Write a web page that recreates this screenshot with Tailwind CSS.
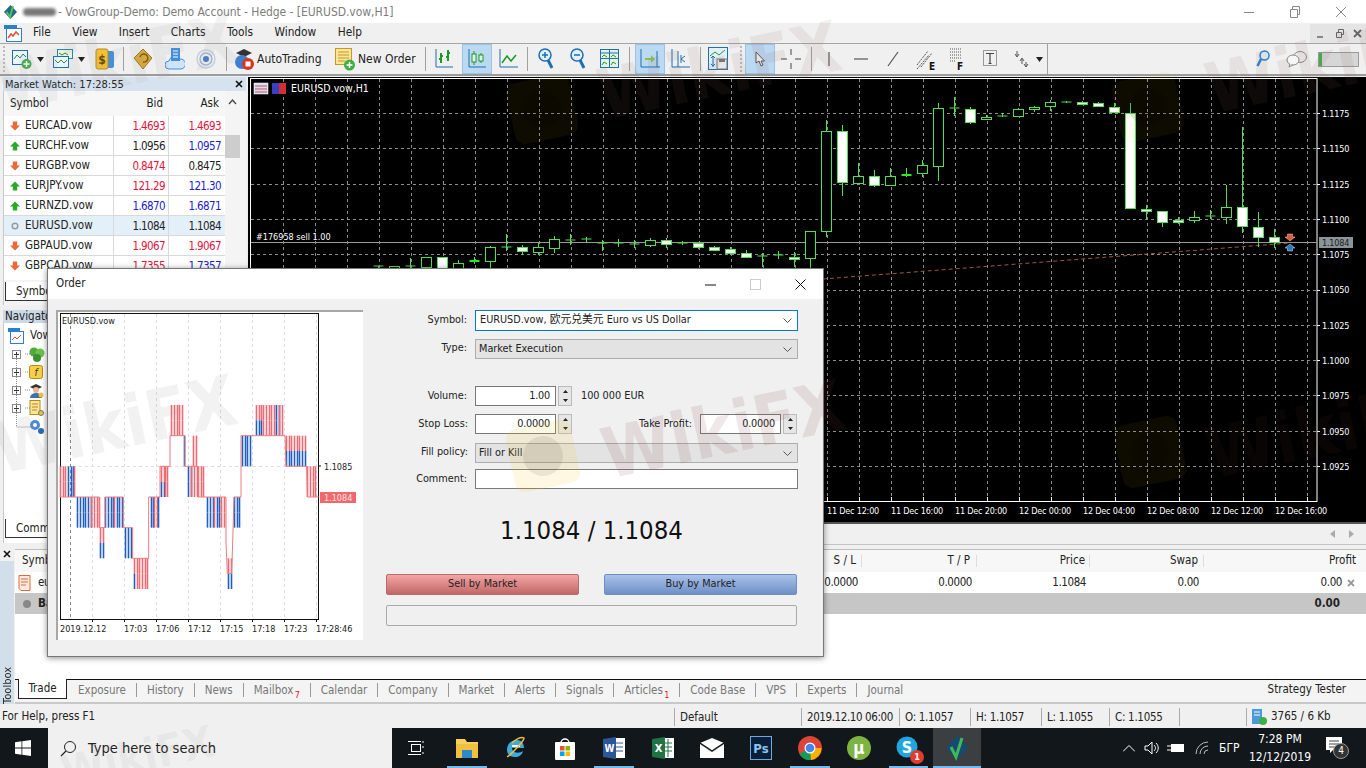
<!DOCTYPE html>
<html lang="en">
<head>
<meta charset="UTF-8">
<title>VowGroup-Demo: Demo Account - Hedge - [EURUSD.vow,H1]</title>
<script src="https://cdn.jsdelivr.net/npm/@tailwindcss/browser@4"></script>
</head>
<body class="relative w-[1366px] h-[768px] overflow-hidden bg-[#f0f0f0] text-[11.5px] leading-none text-[#222] font-['DejaVu_Sans_Condensed','Noto_Sans_CJK_SC',sans-serif]">

<svg class="hidden">
  <defs>
    <symbol id="up" viewBox="0 0 10 10"><path d="M5 .5L10 5.500H7.200V9.500H2.800V5.500H0z" fill="#2aa82a"/></symbol>
    <symbol id="down" viewBox="0 0 10 10"><path d="M5 9.500L0 4.500H2.800V.5H7.200V4.500H10z" fill="#e8693a"/></symbol>
    <symbol id="plus" viewBox="0 0 9 9"><rect x=".5" y=".5" width="8" height="8" fill="#fff" stroke="#8a8a8a"/><path d="M2 4.500H7M4.500 2V7" stroke="#333"/></symbol>
  </defs>
</svg>

<!-- title bar -->
<div class="h-[23px] bg-white flex items-center">
  <svg class="ml-[3px] w-[15px] h-[16px]" viewBox="0 0 15 16"><path d="M7.500 1L14 8l-6.500 7L1 8z" fill="#1f6a8f"/><path d="M3.500 8l3.500 5L10 2" fill="none" stroke="#59c05a" stroke-width="2"/></svg>
  <div class="ml-[5px] w-[33px] h-[8px] bg-[#777] rounded-sm blur-[1.5px]"></div>
  <span class="ml-[2px] text-[12px] tracking-[-0.05px] text-[#7d7d7d]">- VowGroup-Demo: Demo Account - Hedge - [EURUSD.vow,H1]</span>
  <div class="ml-auto mr-[2px] flex items-center">
    <svg class="w-[46px] h-[20px]" viewBox="0 0 46 20"><path d="M18 10.500H28" stroke="#888"/></svg>
    <svg class="w-[46px] h-[20px]" viewBox="0 0 46 20"><path d="M18.500 7.500h7v8h-7zM20.500 7.500v-3h7v8h-2" fill="none" stroke="#888"/></svg>
    <svg class="w-[46px] h-[20px]" viewBox="0 0 46 20"><path d="M18 5L28 15M28 5L18 15" stroke="#888"/></svg>
  </div>
</div>

<!-- menu -->
<div class="h-[21px] flex items-center border-b border-[#a6a6a6] relative">
  <svg class="ml-[4px] w-[18px] h-[18px]" viewBox="0 0 18 18"><rect x="0" y="1" width="13" height="4" fill="#2a7fd0"/><rect x="2.500" y="4.500" width="15" height="13" fill="#fff" stroke="#2a7fd0"/><path d="M4 14l3-4 2 2 3-4 3 3" fill="none" stroke="#e24f3a" stroke-width="1.500"/></svg>
  <nav class="ml-[11px] flex gap-[21.5px] text-[11.8px]">
    <span>File</span><span>View</span><span>Insert</span><span>Charts</span><span>Tools</span><span>Window</span><span>Help</span>
  </nav>
  <div class="ml-auto flex h-[19px] bg-[#e4e4e4] items-center text-[#777]">
    <svg class="w-[20px] h-[19px]" viewBox="0 0 20 19"><path d="M7 13h6" stroke="#666" stroke-width="1.500"/></svg>
    <svg class="w-[20px] h-[19px]" viewBox="0 0 20 19"><path d="M6.500 8.500h5v5h-5zM8.500 8V5.500h5v5H12" fill="none" stroke="#666"/></svg>
    <svg class="w-[16px] h-[19px]" viewBox="0 0 16 19"><path d="M4 6l7 7M11 6l-7 7" stroke="#666" stroke-width="1.800"/></svg>
  </div>
</div>

<!-- toolbar -->
<div class="h-[32px] flex items-center border-b-2 border-[#9b9b9b] bg-[#f0f0f0] shrink-0">
  <div class="ml-[3px] w-[2px] h-[26px] border-l-2 border-dotted border-[#bbb]"></div>
  <svg class="ml-[7px] w-[20px] h-[22px]" viewBox="0 0 20 22"><rect x=".5" y="2.500" width="15" height="14" fill="#eaf5ff" stroke="#1d6fb5"/><path d="M2 11l3-4 3 3 3-4 3 3" fill="none" stroke="#2c8a3e"/><circle cx="14.500" cy="16" r="5" fill="#3fae46"/><path d="M14.500 13v6M11.500 16h6" stroke="#fff" stroke-width="1.500"/></svg>
  <svg class="ml-[5px] w-[7px] h-[5px]" viewBox="0 0 7 5"><path d="M0 0h7L3.500 5z" fill="#222"/></svg>
  <svg class="ml-[9px] w-[20px] h-[22px]" viewBox="0 0 20 22"><rect x="4.500" y="1.500" width="15" height="9" fill="#e6f4d8" stroke="#2c7fb8"/><rect x=".5" y="8.500" width="15" height="11" fill="#eaf5ff" stroke="#1d6fb5"/><path d="M2 12l3 3 3-3 3 3 3-3" fill="none" stroke="#2c8a3e"/><path d="M6 5l3 2 3-2 3 2" fill="none" stroke="#2c8a3e"/></svg>
  <svg class="ml-[5px] w-[7px] h-[5px]" viewBox="0 0 7 5"><path d="M0 0h7L3.500 5z" fill="#222"/></svg>
  <svg class="ml-[10px] w-[20px] h-[26px]" viewBox="0 0 20 26"><rect x="8" y="5" width="11" height="17" rx="2" fill="#3f8fe0"/><rect x="1" y="3" width="12" height="20" rx="2" fill="#f3c233" stroke="#b98a18"/><text x="7" y="18" font-size="12" font-weight="700" text-anchor="middle" fill="#6a4a00">$</text></svg>
  <div class="ml-[8px] w-px h-[24px] bg-[#a0a0a0]"></div>
  <svg class="ml-[9px] w-[20px] h-[22px]" viewBox="0 0 20 22"><path d="M10 1l9 9-9 11-9-11z" fill="#d8a93b" stroke="#9a7420"/><path d="M7 9a4 4 0 1 1 3 5" fill="none" stroke="#7c5b12" stroke-width="1.500"/></svg>
  <svg class="ml-[12px] w-[20px] h-[24px]" viewBox="0 0 20 24"><path d="M4 22a4 4 0 0 1 0-8 6 6 0 0 1 11-2 5 5 0 0 1 1 10z" fill="#cfe4f8" stroke="#3f8fe0"/><rect x="6" y="1" width="9" height="13" fill="#3f8fe0"/><path d="M8 4h5M8 7h5M8 10h5" stroke="#fff"/></svg>
  <svg class="ml-[11px] w-[20px] h-[20px]" viewBox="0 0 20 20"><circle cx="10" cy="10" r="9" fill="none" stroke="#c5cfe0" stroke-width="1.500"/><circle cx="10" cy="10" r="6" fill="none" stroke="#a0b4d8" stroke-width="1.500"/><circle cx="10" cy="10" r="3" fill="#4a78c0"/></svg>
  <div class="ml-[10px] w-px h-[24px] bg-[#a0a0a0]"></div>
  <svg class="ml-[7px] w-[20px] h-[24px]" viewBox="0 0 20 24"><path d="M2 6l8-4 8 4-8 4z" fill="#333"/><circle cx="8" cy="15" r="7" fill="#3f7fd0"/><circle cx="14" cy="17" r="6" fill="#d9351f"/><rect x="11.500" y="14.500" width="5" height="5" fill="#fff"/></svg>
  <span class="ml-[3px] w-[65px] whitespace-nowrap text-[12px]">AutoTrading</span>
  <svg class="ml-[13px] w-[20px] h-[24px]" viewBox="0 0 20 24"><rect x=".5" y="1.500" width="16" height="16" fill="#fbe69a" stroke="#c69a1e"/><path d="M3 5h11M3 8h11M3 11h11M3 14h7" stroke="#c69a1e"/><circle cx="14.500" cy="18" r="5.500" fill="#3fae46"/><path d="M14.500 15v6M11.500 18h6" stroke="#fff" stroke-width="1.500"/></svg>
  <span class="ml-[3px] w-[57px] whitespace-nowrap text-[12px]">New Order</span>
  <div class="ml-[10px] w-px h-[24px] bg-[#a0a0a0]"></div>
  <svg class="ml-[9px] w-[18px] h-[20px]" viewBox="0 0 18 20"><path d="M1 0v18h17" fill="none" stroke="#1d6fb5"/><path d="M6 4v10M4 10h2M6 7h2M13 1v11M11 8h2M13 4h2" stroke="#1a9a2a" stroke-width="2"/></svg>
  <div class="ml-[9px] w-[30px] h-[30px] bg-[#bcd9f2] border border-[#9cc3e6] flex items-center justify-center">
    <svg class="w-[18px] h-[20px]" viewBox="0 0 18 20"><path d="M1 0v18h17" fill="none" stroke="#1d6fb5"/><path d="M6 2v14M13 4v10" stroke="#1a9a2a"/><rect x="4" y="5" width="4" height="8" fill="#e8f5e8" stroke="#1a9a2a"/><rect x="11" y="6" width="4" height="6" fill="#e8f5e8" stroke="#1a9a2a"/></svg>
  </div>
  <svg class="ml-[7px] w-[19px] h-[20px]" viewBox="0 0 19 20"><path d="M1 0v18h18" fill="none" stroke="#1d6fb5"/><path d="M3 14l5-7 4 5 5-6" fill="none" stroke="#1a9a2a" stroke-width="1.500"/></svg>
  <div class="ml-[9px] w-px h-[24px] bg-[#a0a0a0]"></div>
  <svg class="ml-[10px] w-[16px] h-[22px]" viewBox="0 0 16 22"><circle cx="7" cy="7" r="6" fill="#e4f0fb" stroke="#1d6fb5" stroke-width="1.500"/><path d="M4 7h6M7 4v6" stroke="#1d6fb5" stroke-width="1.500"/><path d="M10 12l4 8" stroke="#1d6fb5" stroke-width="3"/></svg>
  <svg class="ml-[16px] w-[16px] h-[22px]" viewBox="0 0 16 22"><circle cx="7" cy="7" r="6" fill="#e4f0fb" stroke="#1d6fb5" stroke-width="1.500"/><path d="M4 7h6" stroke="#1d6fb5" stroke-width="1.500"/><path d="M10 12l4 8" stroke="#1d6fb5" stroke-width="3"/></svg>
  <svg class="ml-[14px] w-[19px] h-[20px]" viewBox="0 0 19 20"><rect x=".5" y=".5" width="18" height="18" fill="#e6f3e0" stroke="#1d6fb5"/><path d="M.5 9.500h18M9.500 .5v18M.5 4h18" stroke="#1d6fb5"/><path d="M2 8l2-2 3 2M11 8l2-2 3 2M2 16l2-3 3 2M11 16l2-3 3 2" fill="none" stroke="#1a9a2a"/></svg>
  <div class="ml-[10px] w-px h-[24px] bg-[#a0a0a0]"></div>
  <div class="ml-[5px] w-[30px] h-[30px] bg-[#bcd9f2] border border-[#9cc3e6] flex items-center justify-center">
    <svg class="w-[20px] h-[20px]" viewBox="0 0 20 20"><path d="M1 0v18h19M17 2v16" fill="none" stroke="#1d6fb5"/><path d="M5 9h6v-3l4 4-4 4v-3H5z" fill="#8cc152"/></svg>
  </div>
  <svg class="ml-[6px] w-[19px] h-[20px]" viewBox="0 0 19 20"><path d="M1 0v18h18M7 2v16" fill="none" stroke="#1d6fb5"/><path d="M10 6v8M10 10l4-3M10 10l4 3" fill="none" stroke="#1d6fb5"/></svg>
  <div class="ml-[10px] w-px h-[24px] bg-[#a0a0a0]"></div>
  <svg class="ml-[7px] w-[20px] h-[24px]" viewBox="0 0 20 24"><rect x=".5" y=".5" width="19" height="22" fill="#e4f0fb" stroke="#1d6fb5"/><path d="M2 9l5-4 4 3 6-5" fill="none" stroke="#1a9a2a"/><path d="M5 9v11M3 11l2-2 2 2M3 17l2 2 2-2" fill="none" stroke="#1d6fb5"/><rect x="9" y="12" width="10" height="10" fill="#e8e8e8" stroke="#777"/><rect x="11" y="12" width="6" height="3" fill="#777"/></svg>
  <div class="ml-[12px] w-[2px] h-[26px] border-l-2 border-dotted border-[#bbb]"></div>
  <div class="ml-[3px] w-[30px] h-[30px] bg-[#bcd9f2] border border-[#9cc3e6] flex items-center justify-center">
    <svg class="w-[10px] h-[16px]" viewBox="0 0 10 16"><path d="M1 1v11l3-2 2 5 2-1-2-4h3.500z" fill="#f4f4f4" stroke="#555"/></svg>
  </div>
  <svg class="ml-[6px] w-[20px] h-[20px]" viewBox="0 0 20 20"><path d="M0 10h6M14 10h6M10 0v6M10 14v6" stroke="#444"/></svg>
  <div class="ml-[10px] w-px h-[24px] bg-[#a0a0a0]"></div>
  <svg class="ml-[13px] w-[8px] h-[16px]" viewBox="0 0 8 16"><path d="M4 1v14" stroke="#555" stroke-width="1.200"/></svg>
  <svg class="ml-[21px] w-[14px] h-[4px]" viewBox="0 0 14 4"><path d="M0 2h14" stroke="#555" stroke-width="1.200"/></svg>
  <svg class="ml-[19px] w-[12px] h-[16px]" viewBox="0 0 12 16"><path d="M1 15L11 1" stroke="#555" stroke-width="1.200"/></svg>
  <svg class="ml-[17px] w-[20px] h-[24px]" viewBox="0 0 20 24"><path d="M1 18L12 4M5 20L16 6M1 22L13 8" stroke="#555" stroke-dasharray="2 1"/><text x="13" y="23" font-size="10" font-weight="700" fill="#111">E</text></svg>
  <svg class="ml-[14px] w-[14px] h-[22px]" viewBox="0 0 14 22"><path d="M0 1h12M0 4h12M0 7h12M0 10h12M0 13h5" stroke="#555" stroke-dasharray="1 1"/><text x="7" y="22" font-size="10" font-weight="700" fill="#111">F</text></svg>
  <svg class="ml-[19px] w-[14px] h-[18px]" viewBox="0 0 14 18"><rect x=".5" y=".5" width="13" height="15" fill="none" stroke="#444" stroke-dasharray="1 1"/><path d="M3 3.500h8M7 3.500v10M5.500 13.500h3" stroke="#444" stroke-width="1.200"/></svg>
  <svg class="ml-[17px] w-[15px] h-[18px]" viewBox="0 0 15 18"><path d="M3 1v5M1 4l2 3 2-3M8 9v5M6 11l2-3 2 3M12 12v5M10 14l2 3 2-3" fill="none" stroke="#555"/></svg>
  <svg class="ml-[7px] w-[7px] h-[5px]" viewBox="0 0 7 5"><path d="M0 0h7L3.500 5z" fill="#222"/></svg>
  <div class="ml-[4px] w-px h-[30px] bg-[#a0a0a0]"></div>
  <svg class="ml-[208px] w-[14px] h-[18px]" viewBox="0 0 14 18"><circle cx="8.500" cy="5.500" r="4.500" fill="#e4f0fb" stroke="#2a7fd0" stroke-width="1.500"/><path d="M5 9l-3.500 7" stroke="#2a7fd0" stroke-width="2.500"/></svg>
  <svg class="ml-[16px] w-[21px] h-[18px]" viewBox="0 0 21 18"><ellipse cx="14" cy="7" rx="6.500" ry="5.500" fill="#eee" stroke="#888"/><ellipse cx="7" cy="10" rx="6" ry="5" fill="#f6f6f6" stroke="#888"/><path d="M4 14l-1 3 4-2" fill="#f6f6f6" stroke="#888"/></svg>
  <div class="ml-[11px] w-[41px] h-[15px] bg-[#d6d6d6] border border-[#9a9a9a] flex">
    <div class="w-[3px] bg-[#3fb24a]"></div>
  </div>
</div>

<!-- charts area -->
<div class="flex h-[469px]">
  <div class="w-[248px] flex flex-col shrink-0">
    <!-- market watch -->
    <div class="h-[229px] flex flex-col">
      <div class="h-[14px] mt-px ml-[3px] mr-[2px] bg-[#d7e2ef] flex items-center px-[2px] text-[#222] text-[11px]">
        <span>Market Watch: 17:28:55</span>
        <svg class="ml-auto mr-px w-[8px] h-[8px]" viewBox="0 0 8 8"><path d="M1 1l6 6M7 1l-6 6" stroke="#111" stroke-width="1.600"/></svg>
      </div>
      <div class="relative flex-1 ml-[3px] mr-[2px] border-l border-[#c8c8c8] bg-white flex overflow-hidden">
        <div class="w-[222px]">
          <div class="h-[25px] grid grid-cols-[109px_55px_55px] items-center bg-[#f7f7f7]">
            <span class="pl-[6px]">Symbol</span><span class="text-right pr-[5px]">Bid</span><span class="text-right pr-[4px]">Ask</span>
          </div>
          <div class="h-[20px] grid grid-cols-[109px_55px_55px] items-center border-b border-[#d9d9d9]">
            <span class="flex items-center pl-[6px] gap-[5px]"><svg class="w-[10px] h-[10px]"><use href="#down"/></svg>EURCAD.vow</span><span class="h-[20px] leading-[20px] text-right pr-[3px] tracking-[-0.6px] text-[#e0143c] border-l border-[#d9d9d9]">1.4693</span><span class="h-[20px] leading-[20px] text-right pr-[2px] tracking-[-0.6px] text-[#e0143c] border-l border-[#d9d9d9]">1.4693</span>
          </div>
          <div class="h-[20px] grid grid-cols-[109px_55px_55px] items-center border-b border-[#d9d9d9]">
            <span class="flex items-center pl-[6px] gap-[5px]"><svg class="w-[10px] h-[10px]"><use href="#up"/></svg>EURCHF.vow</span><span class="h-[20px] leading-[20px] text-right pr-[3px] tracking-[-0.6px] border-l border-[#d9d9d9]">1.0956</span><span class="h-[20px] leading-[20px] text-right pr-[2px] tracking-[-0.6px] text-[#1c1cd0] border-l border-[#d9d9d9]">1.0957</span>
          </div>
          <div class="h-[20px] grid grid-cols-[109px_55px_55px] items-center border-b border-[#d9d9d9]">
            <span class="flex items-center pl-[6px] gap-[5px]"><svg class="w-[10px] h-[10px]"><use href="#down"/></svg>EURGBP.vow</span><span class="h-[20px] leading-[20px] text-right pr-[3px] tracking-[-0.6px] text-[#e0143c] border-l border-[#d9d9d9]">0.8474</span><span class="h-[20px] leading-[20px] text-right pr-[2px] tracking-[-0.6px] border-l border-[#d9d9d9]">0.8475</span>
          </div>
          <div class="h-[20px] grid grid-cols-[109px_55px_55px] items-center border-b border-[#d9d9d9]">
            <span class="flex items-center pl-[6px] gap-[5px]"><svg class="w-[10px] h-[10px]"><use href="#up"/></svg>EURJPY.vow</span><span class="h-[20px] leading-[20px] text-right pr-[3px] tracking-[-0.6px] text-[#e0143c] border-l border-[#d9d9d9]">121.29</span><span class="h-[20px] leading-[20px] text-right pr-[2px] tracking-[-0.6px] text-[#1c1cd0] border-l border-[#d9d9d9]">121.30</span>
          </div>
          <div class="h-[20px] grid grid-cols-[109px_55px_55px] items-center border-b border-[#d9d9d9]">
            <span class="flex items-center pl-[6px] gap-[5px]"><svg class="w-[10px] h-[10px]"><use href="#up"/></svg>EURNZD.vow</span><span class="h-[20px] leading-[20px] text-right pr-[3px] tracking-[-0.6px] text-[#1c1cd0] border-l border-[#d9d9d9]">1.6870</span><span class="h-[20px] leading-[20px] text-right pr-[2px] tracking-[-0.6px] text-[#1c1cd0] border-l border-[#d9d9d9]">1.6871</span>
          </div>
          <div class="h-[20px] grid grid-cols-[109px_55px_55px] items-center border-b border-[#d9d9d9] bg-[#e3eff9]">
            <span class="flex items-center pl-[6px] gap-[5px]"><svg class="w-[10px] h-[10px]" viewBox="0 0 10 10"><circle cx="5" cy="5" r="2.800" fill="none" stroke="#9a9a9a" stroke-width="1.500"/></svg>EURUSD.vow</span><span class="h-[20px] leading-[20px] text-right pr-[3px] tracking-[-0.6px] border-l border-[#d9d9d9]">1.1084</span><span class="h-[20px] leading-[20px] text-right pr-[2px] tracking-[-0.6px] border-l border-[#d9d9d9]">1.1084</span>
          </div>
          <div class="h-[20px] grid grid-cols-[109px_55px_55px] items-center border-b border-[#d9d9d9]">
            <span class="flex items-center pl-[6px] gap-[5px]"><svg class="w-[10px] h-[10px]"><use href="#down"/></svg>GBPAUD.vow</span><span class="h-[20px] leading-[20px] text-right pr-[3px] tracking-[-0.6px] text-[#e0143c] border-l border-[#d9d9d9]">1.9067</span><span class="h-[20px] leading-[20px] text-right pr-[2px] tracking-[-0.6px] text-[#e0143c] border-l border-[#d9d9d9]">1.9067</span>
          </div>
          <div class="h-[20px] grid grid-cols-[109px_55px_55px] items-center">
            <span class="flex items-center pl-[6px] gap-[5px]"><svg class="w-[10px] h-[10px]"><use href="#down"/></svg>GBPCAD.vow</span><span class="h-[20px] leading-[20px] text-right pr-[3px] tracking-[-0.6px] text-[#e0143c] border-l border-[#d9d9d9]">1.7355</span><span class="h-[20px] leading-[20px] text-right pr-[2px] tracking-[-0.6px] text-[#1c1cd0] border-l border-[#d9d9d9]">1.7357</span>
          </div>
        </div>
        <div class="w-[21px] bg-[#f4f4f4] relative">
          <svg class="absolute left-[3px] top-[8px] w-[9px] h-[6px]" viewBox="0 0 9 6"><path d="M1 5l3.500-4L8 5" fill="none" stroke="#444" stroke-width="1.300"/></svg>
          <div class="absolute left-0 top-[44px] w-[15px] h-[23px] bg-[#cdcdcd]"></div>
        </div>
      </div>
      <div class="h-[25px] ml-[3px] mr-[2px] border-l border-[#c8c8c8] bg-[#f4f4f4] relative">
        <div class="absolute left-[1px] top-[2px] w-[50px] h-[19px] bg-white border-x border-b border-[#333] pl-[10px] leading-[18px]">Symbols</div>
      </div>
    </div>
    <!-- navigator -->
    <div class="mt-[5px] h-[233px] flex flex-col">
      <div class="h-[13px] ml-[3px] mr-[2px] bg-[#ccd9e8] px-[2px] leading-[13px]">Navigator</div>
      <div class="relative flex-1 ml-[3px] mr-[2px] border-l border-[#c8c8c8] bg-white pl-[4px] pt-[4px]">
        <div class="h-[18px] flex items-center gap-[6px]">
          <svg class="w-[16px] h-[16px]" viewBox="0 0 16 16"><rect x="0" y="0" width="12" height="4" fill="#2a7fd0"/><rect x="2.500" y="3.500" width="13" height="12" fill="#fff" stroke="#2a7fd0"/><path d="M4 12l3-3 2 2 4-4" fill="none" stroke="#e24f3a"/></svg><span>VowGroup</span>
        </div>
        <div class="h-[18px] flex items-center pl-[4px] gap-[8px]"><svg class="w-[9px] h-[9px]"><use href="#plus"/></svg><svg class="w-[16px] h-[15px]" viewBox="0 0 16 15"><circle cx="5" cy="5" r="4.500" fill="#4aaa3c"/><circle cx="11" cy="6" r="4.500" fill="#6cc04a"/><circle cx="8" cy="11" r="4" fill="#3b8f2e"/></svg></div>
        <div class="h-[18px] flex items-center pl-[4px] gap-[8px]"><svg class="w-[9px] h-[9px]"><use href="#plus"/></svg><svg class="w-[14px] h-[14px]" viewBox="0 0 14 14"><rect x=".5" y=".5" width="13" height="13" rx="2" fill="#f7cf45" stroke="#b98a18"/><text x="7" y="11" font-size="10" font-style="italic" text-anchor="middle" fill="#333">f</text></svg></div>
        <div class="h-[18px] flex items-center pl-[4px] gap-[8px]"><svg class="w-[9px] h-[9px]"><use href="#plus"/></svg><svg class="w-[15px] h-[15px]" viewBox="0 0 15 15"><path d="M1 4l6-3 6 3-6 3z" fill="#333"/><circle cx="7" cy="7" r="3" fill="#e8b890"/><path d="M1 15a6 5 0 0 1 12 0z" fill="#3a6fb0"/><circle cx="12" cy="12" r="2.500" fill="#f3c233"/></svg></div>
        <div class="h-[18px] flex items-center pl-[4px] gap-[8px]"><svg class="w-[9px] h-[9px]"><use href="#plus"/></svg><svg class="w-[15px] h-[16px]" viewBox="0 0 15 16"><rect x="1" y=".5" width="10" height="14" fill="#fbe69a" stroke="#b98a18"/><path d="M3 4h6M3 7h6M3 10h5" stroke="#b98a18"/><circle cx="12" cy="13" r="2.500" fill="#f3c233" stroke="#777"/></svg></div>
        <div class="h-[18px] flex items-center pl-[21px]"><svg class="w-[15px] h-[15px]" viewBox="0 0 15 15"><circle cx="6" cy="6" r="5" fill="#4a88d8"/><circle cx="6" cy="6" r="2" fill="#fff"/><circle cx="12" cy="12" r="3" fill="#2a68b8"/></svg></div>
        <svg class="absolute left-[9px] top-[22px] w-[20px] h-[90px]" viewBox="0 0 20 90"><path d="M3.500 10V82H19M12 9h6M12 27h6M12 45h6M12 63h6" fill="none" stroke="#8a8a8a" stroke-dasharray="1 1"/></svg>
        <div class="absolute left-[1px] bottom-[5px] w-[60px] h-[19px] bg-white border-x border-b border-[#333] pl-[10px] leading-[18px]">Common</div>
      </div>
    </div>
  </div>

  <div class="flex-1 flex flex-col">
    <svg id="chart" class="mt-px w-[1118px] h-[445px] bg-black block" viewBox="248 77 1118 445">
      <rect x="250.500" y="78.500" width="1066.500" height="423" fill="none" stroke="#fff"/>
      <g id="grid"></g>
      <rect x="254" y="83" width="14" height="11" fill="#cfe0f8" stroke="#fff" stroke-width=".5"/>
      <path d="M255 86h12M255 89h12M255 92h12" stroke="#d85050"/>
      <rect x="272" y="83" width="7" height="11" fill="#3840c0"/><rect x="279" y="83" width="7" height="11" fill="#d03030"/>
      <text x="291" y="92" fill="#fff" font-size="10.500">EURUSD.vow,H1</text>
      <line x1="251" x2="1317" y1="242.500" y2="242.500" stroke="#9a9a9a"/>
      <text x="256" y="240" fill="#fff" font-size="9">#176958 sell 1.00</text>
      <path d="M823 279L1290 243" stroke="#9a5a44" stroke-dasharray="4 3" fill="none"/>
      <g id="candles"></g>
      <path d="M1290 241l5-4h-2.500v-3h-5v3H1285z" fill="#e05a3a" stroke="#f4d0c0" stroke-width=".5"/>
      <path d="M1290 244l5 4h-2.500v3h-5v-3H1285z" fill="#2a78c8" stroke="#d0e4f4" stroke-width=".5"/>
      <rect x="1319" y="237" width="34" height="11" fill="#8b9498"/>
      <text x="1322" y="246" fill="#1a1a1a" font-size="9" letter-spacing="-.2">1.1084</text>
      <g fill="#fff" font-size="9" letter-spacing="-.2">
        <text x="1322" y="117">1.1175</text><text x="1322" y="152">1.1150</text><text x="1322" y="188">1.1125</text><text x="1322" y="223">1.1100</text><text x="1322" y="258">1.1075</text><text x="1322" y="293">1.1050</text><text x="1322" y="329">1.1025</text><text x="1322" y="364">1.1000</text><text x="1322" y="399">1.0975</text><text x="1322" y="435">1.0950</text><text x="1322" y="470">1.0925</text>
        <text x="827" y="514">11 Dec 12:00</text><text x="891" y="514">11 Dec 16:00</text><text x="955" y="514">11 Dec 20:00</text><text x="1019" y="514">12 Dec 00:00</text><text x="1083" y="514">12 Dec 04:00</text><text x="1147" y="514">12 Dec 08:00</text><text x="1211" y="514">12 Dec 12:00</text><text x="1275" y="514">12 Dec 16:00</text>
      </g>
    </svg>
    <div class="flex-1 border-t-2 border-[#555] bg-[#f0f0f0] flex items-center justify-end gap-[14px] pr-[12px] border-b border-b-[#c4c4c4]">
      <svg class="w-[5px] h-[8px]" viewBox="0 0 5 8"><path d="M5 0v8L0 4z" fill="#aaa"/></svg>
      <svg class="w-[5px] h-[8px]" viewBox="0 0 5 8"><path d="M0 0v8l5-4z" fill="#aaa"/></svg>
    </div>
  </div>
</div>

<!-- toolbox -->
<div class="h-[159px] flex">
  <div class="w-[15px] shrink-0 flex flex-col">
    <svg class="mt-[5px] ml-[3px] w-[8px] h-[8px]" viewBox="0 0 8 8"><path d="M1 1l6 6M7 1l-6 6" stroke="#111" stroke-width="1.600"/></svg>
    <div class="mt-[3px] flex-1 mr-px bg-[#d2deea] flex items-end justify-center">
      <span class="[writing-mode:vertical-rl] rotate-180 pb-[3px] text-[11px]">Toolbox</span>
    </div>
  </div>
  <div class="flex-1 flex flex-col pt-[4px]">
    <div class="h-[23px] flex items-center bg-[#f7f7f7] border-t border-[#bdbdbd]">
      <span class="w-[846px] flex justify-between pl-[7px] pr-[5px]"><span>Symbol</span><span>S / L</span></span>
      <span class="w-[115px] text-right pr-[6px] border-l border-[#ddd]">T / P</span>
      <span class="w-[113px] text-right pr-[4px] border-l border-[#ddd]">Price</span>
      <span class="w-[114px] text-right pr-[5px] border-l border-[#ddd]">Swap</span>
      <span class="w-[163px] text-right pr-[10px] border-l border-[#ddd]">Profit</span>
    </div>
    <div class="h-[21px] flex items-center bg-white tracking-[-0.4px]">
      <span class="w-[846px] flex justify-between items-center pl-[3px] pr-[3px]">
        <span class="flex items-center gap-[7px]"><svg class="w-[13px] h-[16px]" viewBox="0 0 13 16"><path d="M1 .5h11v15H3l-2-2z" fill="#fbeade" stroke="#dd6a3a"/><path d="M3 4h7M3 7h7M3 10h5" stroke="#dd6a3a"/></svg>eurusd.vow</span>
        <span>0.0000</span>
      </span>
      <span class="w-[115px] text-right pr-[4px]">0.0000</span>
      <span class="w-[113px] text-right pr-[3px]">1.1084</span>
      <span class="w-[114px] text-right pr-[4px]">0.00</span>
      <span class="w-[163px] flex justify-end items-center gap-[5px] pr-[11px]">0.00
        <svg class="w-[8px] h-[8px]" viewBox="0 0 8 8"><path d="M1 1l6 6M7 1l-6 6" stroke="#999" stroke-width="1.800"/></svg>
      </span>
    </div>
    <div class="h-[21px] flex items-center justify-between bg-[#c6c6c6] pl-[8px] pr-[26px] font-bold">
      <span class="flex items-center gap-[7px]"><svg class="w-[8px] h-[8px]" viewBox="0 0 8 8"><circle cx="4" cy="4" r="4" fill="#888"/></svg>Balance</span><span>0.00</span>
    </div>
    <div class="flex-1 bg-white"></div>
    <div class="h-[25px] border-t border-[#111] flex bg-[#f4f4f4] text-[#777] pl-[3px] border-b-2 border-b-[#c8c8c8] pb-[3px]">
      <span class="w-[49px] bg-white border-x border-b border-[#222] text-[#222] flex items-center justify-center -mt-px">Trade</span>
      <div class="flex items-center ml-px">
        <span class="px-[10px] border-r border-[#999] h-[14px] leading-[14px]">Exposure</span>
        <span class="px-[10px] border-r border-[#999] h-[14px] leading-[14px]">History</span>
        <span class="px-[10px] border-r border-[#999] h-[14px] leading-[14px]">News</span>
        <span class="px-[10px] border-r border-[#999] h-[14px] leading-[14px]">Mailbox <sup class="text-[#e0142c] text-[9px] top-[4px] relative -ml-[2px]">7</sup></span>
        <span class="px-[10px] border-r border-[#999] h-[14px] leading-[14px]">Calendar</span>
        <span class="px-[10px] border-r border-[#999] h-[14px] leading-[14px]">Company</span>
        <span class="px-[10px] border-r border-[#999] h-[14px] leading-[14px]">Market</span>
        <span class="px-[10px] border-r border-[#999] h-[14px] leading-[14px]">Alerts</span>
        <span class="px-[10px] border-r border-[#999] h-[14px] leading-[14px]">Signals</span>
        <span class="px-[10px] border-r border-[#999] h-[14px] leading-[14px]">Articles <sup class="text-[#e0142c] text-[9px] top-[4px] relative -ml-[2px]">1</sup></span>
        <span class="px-[10px] border-r border-[#999] h-[14px] leading-[14px]">Code Base</span>
        <span class="px-[10px] border-r border-[#999] h-[14px] leading-[14px]">VPS</span>
        <span class="px-[10px] border-r border-[#999] h-[14px] leading-[14px]">Experts</span>
        <span class="px-[10px] h-[14px] leading-[14px]">Journal</span>
      </div>
      <span class="ml-auto mr-[20px] self-center text-[#222]">Strategy Tester</span>
    </div>
  </div>
</div>

<!-- status bar -->
<div class="h-[24px] flex items-center bg-[#f0f0f0] whitespace-nowrap pt-[2px]">
  <span class="w-[674px] pl-[2px]">For Help, press F1</span>
  <span class="w-[127px] pl-[5px] border-l border-[#aaa] h-[18px] leading-[18px]">Default</span>
  <span class="w-[98px] pl-[5px] border-l border-[#aaa] h-[18px] leading-[18px] tracking-[-0.4px]">2019.12.10 06:00</span>
  <span class="w-[71px] pl-[5px] border-l border-[#aaa] h-[18px] leading-[18px] tracking-[-0.3px]">O: 1.1057</span>
  <span class="w-[71px] pl-[5px] border-l border-[#aaa] h-[18px] leading-[18px] tracking-[-0.3px]">H: 1.1057</span>
  <span class="w-[68px] pl-[5px] border-l border-[#aaa] h-[18px] leading-[18px] tracking-[-0.3px]">L: 1.1055</span>
  <span class="w-[70px] pl-[5px] border-l border-[#aaa] h-[18px] leading-[18px] tracking-[-0.3px]">C: 1.1055</span>
  <span class="w-[67px] border-l border-[#aaa] h-[18px]"></span>
  <span class="flex-1 pl-[4px] border-l border-[#aaa] h-[18px] flex items-center gap-[3px]"><svg class="w-[17px] h-[18px]" viewBox="0 0 17 18"><rect x="1" y="1" width="10" height="15" fill="#4a9ad8"/><path d="M3 4h6M3 7h6" stroke="#fff"/><circle cx="12" cy="13" r="4" fill="#3fae46"/></svg>3765 / 6 Kb</span>
</div>

<!-- taskbar -->
<div class="h-[40px] bg-[#12171b] flex items-center relative text-white">
  <svg class="ml-[15px] w-[16px] h-[16px]" viewBox="0 0 16 16"><path d="M0 2.200l6.500-.9v6.300H0zM7.300 1.200L16 0v7.600H7.300zM0 8.400h6.500v6.300L0 13.800zM7.300 8.400H16V16l-8.700-1.200z" fill="#fff"/></svg>
  <div class="ml-[17px] w-[344px] h-[40px] bg-[#f0f0f0] flex items-center pl-[12px] text-[#222]">
    <svg class="w-[17px] h-[17px]" viewBox="0 0 17 17"><circle cx="10" cy="7" r="5.500" fill="none" stroke="#222"/><path d="M6 11L1 16" stroke="#222" stroke-width="1.300"/></svg>
    <span class="ml-[11px] text-[14.500px]">Type here to search</span>
  </div>
  <svg class="ml-[16px] w-[16px] h-[18px]" viewBox="0 0 16 18"><rect x="3.500" y="5.500" width="9" height="7" fill="none" stroke="#fff"/><path d="M0 2.500h13M0 15.500h13M15 2v2M15 7v2M15 13v2" stroke="#fff"/></svg>
  <svg class="ml-[31px] w-[24px] h-[22px]" viewBox="0 0 24 22"><path d="M1 2h9l2 3h11v16H1z" fill="#f6cf5c"/><rect x="1" y="7" width="22" height="14" fill="#f3bf3e"/><rect x="7" y="13" width="10" height="8" fill="#2d89c8"/></svg>
  <svg class="ml-[25px] w-[24px] h-[24px]" viewBox="0 0 24 24"><path d="M3 14c0-6 4-10 10-10 5 0 7 4 7 8H8c0 5 7 6 11 3-1 4-4 6-8 6-5 0-8-3-8-7z" fill="#3fa9e0"/><rect x="8" y="9" width="8" height="2" fill="#fff"/><path d="M4 20C1 24 20 6 20 2c-3-2-9 2-12 5" fill="none" stroke="#f0c030" stroke-width="1.500"/></svg>
  <svg class="ml-[26px] w-[22px] h-[26px]" viewBox="0 0 22 26"><path d="M7 8a4 4 0 0 1 8 0" fill="none" stroke="#fff" stroke-width="1.500"/><rect x="1" y="7" width="20" height="18" rx="1" fill="#fff"/><rect x="6" y="11" width="4.500" height="4.500" fill="#f25022"/><rect x="11.500" y="11" width="4.500" height="4.500" fill="#7fba00"/><rect x="6" y="16.500" width="4.500" height="4.500" fill="#00a4ef"/><rect x="11.500" y="16.500" width="4.500" height="4.500" fill="#ffb900"/></svg>
  <svg class="ml-[27px] w-[23px] h-[24px]" viewBox="0 0 23 24"><rect x="9" y="2" width="13" height="20" fill="#fff"/><path d="M13 7h7M13 11h7M13 15h7" stroke="#2b579a"/><path d="M0 3l13-2v22L0 21z" fill="#2b579a"/><text x="6.500" y="16" fill="#fff" font-size="10" font-weight="700" text-anchor="middle">W</text></svg>
  <svg class="ml-[26px] w-[23px] h-[24px]" viewBox="0 0 23 24"><rect x="9" y="2" width="13" height="20" fill="#fff"/><path d="M13 7h7M13 11h7M13 15h7M16 3v18" stroke="#217346"/><path d="M0 3l13-2v22L0 21z" fill="#217346"/><text x="6.500" y="16" fill="#fff" font-size="11" font-weight="700" text-anchor="middle">X</text></svg>
  <svg class="ml-[25px] w-[24px] h-[20px]" viewBox="0 0 24 20"><path d="M0 5L12 0l12 5v15H0z" fill="#fff"/><path d="M0 5l12 8L24 5" fill="none" stroke="#12171b" stroke-width="1.500"/></svg>
  <div class="ml-[26px] w-[22px] h-[24px] bg-[#0b1f3a] border border-[#6fa8dc] text-[#8cc4ef] text-[13px] font-bold flex items-center justify-center">Ps</div>
  <svg class="ml-[26px] w-[24px] h-[24px]" viewBox="0 0 24 24"><circle cx="12" cy="12" r="12" fill="#db4437"/><path d="M12 12L1.500 18A12 12 0 0 0 13 24z" fill="#0f9d58"/><path d="M12 12h11.500A12 12 0 0 1 13 24z" fill="#f4b400"/><circle cx="12" cy="12" r="5.500" fill="#fff"/><circle cx="12" cy="12" r="4.300" fill="#4285f4"/></svg>
  <svg class="ml-[25px] w-[24px] h-[26px]" viewBox="0 0 24 26"><circle cx="12" cy="13" r="12" fill="#7cb342"/><text x="12" y="19" fill="#fff" font-size="17" font-weight="700" text-anchor="middle">µ</text></svg>
  <div class="ml-[25px] relative w-[24px] h-[26px]">
    <svg class="w-[22px] h-[24px]" viewBox="0 0 22 24"><circle cx="11" cy="12" r="10.500" fill="#1fa5e0"/><text x="11" y="18" fill="#fff" font-size="16" font-weight="700" text-anchor="middle">S</text></svg>
    <span class="absolute -right-[4px] bottom-[-3px] w-[14px] h-[14px] bg-[#e23b30] rounded-full text-[9px] font-bold flex items-center justify-center">1</span>
  </div>
  <div class="ml-[13px] w-[48px] h-[40px] bg-[#3b3f42] flex items-center justify-center">
    <svg class="w-[24px] h-[26px]" viewBox="0 0 24 26"><path d="M12 1l11 12-11 12L1 13z" fill="#164a72"/><path d="M6 12l5 10L17 3" fill="none" stroke="#3fb85a" stroke-width="3"/></svg>
  </div>
  <div class="absolute inset-x-0 bottom-0 h-[2px] flex">
    <span class="ml-[447px] w-[40px] bg-[#76b9ed]"></span><span class="ml-[107px] w-[40px] bg-[#76b9ed]"></span><span class="ml-[156px] w-[40px] bg-[#76b9ed]"></span><span class="ml-[59px] w-[39px] bg-[#76b9ed]"></span><span class="ml-[5px] w-[48px] bg-[#76b9ed]"></span>
  </div>
  <svg class="ml-[142px] w-[12px] h-[7px]" viewBox="0 0 12 7"><path d="M0 6.500l6-6 6 6" fill="none" stroke="#fff"/></svg>
  <svg class="ml-[9px] w-[15px] h-[14px]" viewBox="0 0 15 14"><path d="M1 5h3l4-4v12L4 9H1zM10 4c2 2 2 4 0 6M12 2c3 3 3 7 0 10" fill="none" stroke="#fff"/></svg>
  <svg class="ml-[8px] w-[18px] h-[12px]" viewBox="0 0 18 12"><rect x="4" y="2" width="13" height="8" fill="#fff"/><path d="M0 4h4M0 8h4" stroke="#fff"/></svg>
  <svg class="ml-[10px] w-[15px] h-[14px]" viewBox="0 0 15 14"><path d="M1 13A12 12 0 0 1 13 1M5 13a8 8 0 0 1 8-8M9 13a4 4 0 0 1 4-4" fill="none" stroke="#bbb"/></svg>
  <span class="ml-[9px] w-[22px] text-[12px]">БГР</span>
  <div class="ml-[6px] w-[66px] flex flex-col items-center gap-[6px] text-[12px]"><span>7:28 PM</span><span>12/12/2019</span></div>
  <div class="ml-[13px] relative w-[20px] h-[22px]">
    <svg class="w-[16px] h-[18px]" viewBox="0 0 16 18"><path d="M0 0h16v13H7l-3 3v-3H0z" fill="#fff"/><path d="M3 4h10M3 7h10M3 10h6" stroke="#444"/></svg>
    <span class="absolute left-[7px] top-[6px] w-[16px] h-[16px] rounded-full bg-[#333] border border-[#999] text-[10px] flex items-center justify-center">4</span>
  </div>
</div>

<!-- order dialog -->
<div class="absolute left-[47px] top-[268px] w-[777px] h-[389px] bg-[#f0f0f0] border border-[#777] shadow-[0_1px_6px_rgba(0,0,0,0.45)] flex flex-col">
  <div class="h-[30px] bg-white flex items-center pl-[8px] shrink-0">
    <span>Order</span>
    <div class="ml-auto flex items-center gap-[34px] pr-[17px]">
      <svg class="w-[11px] h-[11px]" viewBox="0 0 11 11"><path d="M0 6h11" stroke="#111"/></svg>
      <svg class="w-[11px] h-[11px]" viewBox="0 0 11 11"><rect x=".5" y=".5" width="10" height="10" fill="none" stroke="#ccc"/></svg>
      <svg class="w-[11px] h-[11px]" viewBox="0 0 11 11"><path d="M.5 .5l10 10M10.500 .5l-10 10" stroke="#111"/></svg>
    </div>
  </div>
  <div class="flex-1 flex">
    <!-- tick chart -->
    <svg id="ticks" class="ml-[8px] mt-[11px] w-[307px] h-[330px] shrink-0 bg-white border-t-2 border-l-2 border-[#a8a8a8]" viewBox="58 312 305 328">
      <rect x="60.500" y="313.500" width="258" height="306" fill="#fff" stroke="#111"/>
      <g id="tickgrid"></g>
      <g id="tickbars"></g>
      <path d="M318 466h3" stroke="#111"/>
      <g font-size="9" fill="#222">
        <text x="62" y="324">EURUSD.vow</text>
        <text x="324" y="470">1.1085</text>
        <rect x="320" y="492" width="36" height="11" fill="#f0686c"/>
        <text x="324" y="501" fill="#fde4e4">1.1084</text>
        <text x="60" y="632">2019.12.12</text><text x="124" y="632">17:03</text><text x="156" y="632">17:06</text><text x="188" y="632">17:12</text><text x="220" y="632">17:15</text><text x="252" y="632">17:18</text><text x="284" y="632">17:23</text><text x="316" y="632">17:28:46</text>
      </g>
    </svg>
    <!-- order form -->
    <div class="ml-[7px] w-[430px] pt-[11px] text-[10.800px]">
      <div class="flex items-center h-[21px]">
        <span class="w-[97px] text-right mr-[8px]">Symbol:</span>
        <div class="w-[323px] h-[21px] bg-white border border-[#0078d7] flex items-center px-[4px]">
          <span>EURUSD.vow, 欧元兑美元 Euro vs US Dollar</span>
          <svg class="ml-auto mr-px w-[9px] h-[5px]" viewBox="0 0 9 5"><path d="M.5 .5l4 4 4-4" fill="none" stroke="#555"/></svg>
        </div>
      </div>
      <div class="flex items-center h-[20px] mt-[8px]">
        <span class="w-[97px] text-right mr-[8px] -mt-[2px]">Type:</span>
        <div class="w-[323px] h-[20px] bg-[#e3e3e3] border border-[#adadad] flex items-center px-[3px]">
          <span>Market Execution</span>
          <svg class="ml-auto mr-[2px] w-[9px] h-[5px]" viewBox="0 0 9 5"><path d="M.5 .5l4 4 4-4" fill="none" stroke="#555"/></svg>
        </div>
      </div>
      <div class="flex items-center h-[20px] mt-[27px]">
        <span class="w-[97px] text-right mr-[8px]">Volume:</span>
        <div class="w-[81px] h-[20px] bg-white border border-[#7a7a7a] text-right pr-[5px] leading-[17px] tracking-[-0.2px]">1.00</div>
        <div class="ml-[2px] w-[14px] h-[20px] bg-[#e6e6e6] border border-[#bbb] flex flex-col items-center justify-around"><svg class="w-[5px] h-[3px]" viewBox="0 0 5 3"><path d="M0 3l2.500-3L5 3z" fill="#222"/></svg><svg class="w-[5px] h-[3px]" viewBox="0 0 5 3"><path d="M0 0l2.500 3L5 0z" fill="#222"/></svg></div>
        <span class="ml-[9px]">100 000 EUR</span>
      </div>
      <div class="flex items-center h-[20px] mt-[8px]">
        <span class="w-[98px] text-right mr-[7px]">Stop Loss:</span>
        <div class="w-[81px] h-[20px] bg-white border border-[#7a7a7a] text-right pr-[5px] leading-[17px] tracking-[-0.2px]">0.0000</div>
        <div class="ml-[2px] w-[14px] h-[20px] bg-[#e6e6e6] border border-[#bbb] flex flex-col items-center justify-around"><svg class="w-[5px] h-[3px]" viewBox="0 0 5 3"><path d="M0 3l2.500-3L5 3z" fill="#222"/></svg><svg class="w-[5px] h-[3px]" viewBox="0 0 5 3"><path d="M0 0l2.500 3L5 0z" fill="#222"/></svg></div>
        <span class="w-[120px] text-right">Take Profit:</span>
        <div class="ml-[8px] w-[81px] h-[20px] bg-white border border-[#7a7a7a] text-right pr-[5px] leading-[17px] tracking-[-0.2px]">0.0000</div>
        <div class="ml-[2px] w-[14px] h-[20px] bg-[#e6e6e6] border border-[#bbb] flex flex-col items-center justify-around"><svg class="w-[5px] h-[3px]" viewBox="0 0 5 3"><path d="M0 3l2.500-3L5 3z" fill="#222"/></svg><svg class="w-[5px] h-[3px]" viewBox="0 0 5 3"><path d="M0 0l2.500 3L5 0z" fill="#222"/></svg></div>
      </div>
      <div class="flex items-center h-[20px] mt-[9px]">
        <span class="w-[98px] text-right mr-[7px] -mt-[2px]">Fill policy:</span>
        <div class="w-[323px] h-[20px] bg-[#e3e3e3] border border-[#adadad] flex items-center px-[3px]">
          <span>Fill or Kill</span>
          <svg class="ml-auto mr-[2px] w-[9px] h-[5px]" viewBox="0 0 9 5"><path d="M.5 .5l4 4 4-4" fill="none" stroke="#555"/></svg>
        </div>
      </div>
      <div class="flex items-center h-[20px] mt-[6px]">
        <span class="w-[97px] text-right mr-[8px]">Comment:</span>
        <div class="w-[323px] h-[20px] bg-white border border-[#7a7a7a]"></div>
      </div>
      <div class="mt-[26px] pl-[16px] w-[427px] text-center text-[25.500px] leading-[30px] text-[#111]">1.1084 / 1.1084</div>
      <div class="mt-[29px] ml-[16px] flex gap-[25px]">
        <div class="w-[193px] h-[21px] rounded-[2px] border border-[#b96a6a] bg-linear-to-b from-[#f5a5a5] to-[#c06868] flex items-center justify-center">Sell by Market</div>
        <div class="w-[193px] h-[21px] rounded-[2px] border border-[#6f8fc4] bg-linear-to-b from-[#aac2ea] to-[#6f90c6] flex items-center justify-center">Buy by Market</div>
      </div>
      <div class="mt-[10px] ml-[16px] w-[411px] h-[21px] border border-[#aaa] rounded-[2px]"></div>
    </div>
  </div>
</div>

<!-- watermark -->
<div class="absolute inset-0 pointer-events-none overflow-hidden">
  <span class="absolute left-[-6px] top-[28px] -rotate-12 text-[70px] font-bold text-[#a09090]/10 leading-none">WikiFX</span>
  <span class="absolute left-[596px] top-[36px] -rotate-12 text-[70px] font-bold text-[#906060]/10 leading-none">WikiFX</span>
  <span class="absolute left-[1204px] top-[30px] -rotate-12 text-[70px] font-bold text-[#906060]/10 leading-none">WikiFX</span>
  <span class="absolute left-[-8px] top-[390px] -rotate-12 text-[70px] font-bold text-[#a09090]/12 leading-none">WikiFX</span>
  <span class="absolute left-[600px] top-[395px] -rotate-12 text-[70px] font-bold text-[#804040]/12 leading-none">WikiFX</span>
  <span class="absolute left-[1204px] top-[395px] -rotate-12 text-[70px] font-bold text-[#804040]/8 leading-none">WikiFX</span>
  <span class="absolute left-[60px] top-[735px] -rotate-12 text-[44px] font-bold text-[#a09090]/10 leading-none">WikiFX</span>
  <div class="absolute left-[510px] top-[78px] w-[64px] h-[62px] -rotate-12 rounded-[10px] bg-[#f5c518]/6 flex items-center justify-center"><div class="w-[38px] h-[38px] rounded-full bg-black/10"></div></div>
  <div class="absolute left-[1116px] top-[76px] w-[64px] h-[62px] -rotate-12 rounded-[10px] bg-[#f5c518]/6 flex items-center justify-center"><div class="w-[38px] h-[38px] rounded-full bg-black/10"></div></div>
  <div class="absolute left-[510px] top-[424px] w-[66px] h-[64px] -rotate-12 rounded-[10px] bg-[#f5c518]/12 flex items-center justify-center"><div class="w-[40px] h-[40px] rounded-full bg-black/8"></div></div>
  <div class="absolute left-[1118px] top-[420px] w-[64px] h-[64px] -rotate-12 rounded-[10px] bg-[#f5c518]/6 flex items-center justify-center"><div class="w-[38px] h-[38px] rounded-full bg-black/10"></div></div>
</div>

<script>
  // candles: [index, wickTop, bodyTop, bodyBottom, wickBottom, filled]
  var candles = [
    [-28,266,266,266,270,0],[-27,266,266,270,270,0],[-26,258,266,266,270,0],[-25,257,257,267,268,0],[-24,257,257,268,268,2],[-23,260,263,268,269,0],[-22,257,261,261,264,3],[-21,246,247,261,269,0],[-20,234,247,247,251,0],
    [-19,245,247,251,255,1],[-18,242,247,252,255,0],[-17,236,239,248,253,0],[-16,234,240,240,245,0],[-15,237,239,239,243,0],[-14,240,243,243,251,0],[-13,239,243,243,247,0],[-12,240,244,244,248,0],[-11,238,240,245,247,0],[-10,238,240,244,248,1],[-9,241,243,243,245,0],[-8,242,243,247,249,1],[-7,246,247,250,251,1],[-6,247,249,253,255,1],[-5,250,253,257,258,1],[-4,253,256,256,267,0],[-3,251,255,255,259,0],[-2,252,257,259,267,1],[-1,231,231,258,268,0],
    [0,120,131,231,237,0],[1,125,131,182,196,1],[2,163,176,183,183,0],[3,170,176,185,187,1],[4,168,176,185,186,0],[5,168,175,175,177,3],[6,160,165,173,177,0],[7,103,108,166,181,0],[8,97,108,108,116,0],[9,107,109,122,124,1],[10,115,117,119,120,0],[11,113,116,116,117,0],[12,108,109,116,117,0],[13,106,107,109,112,0],[14,100,102,106,111,0],[15,101,102,102,103,0],[16,101,102,104,105,1],[17,102,103,106,107,1],[18,103,107,112,113,1],[19,103,113,208,209,1],
    [20,205,209,211,219,1],[21,211,211,222,227,1],[22,217,220,222,224,1],[23,211,217,220,223,0],[24,210,216,216,219,0],[25,185,207,217,224,0],[26,127,207,226,233,1],[27,212,227,237,247,1],[28,229,237,242,248,1]
  ];
  var s = '';
  candles.forEach(function (c) {
    var x = 826.5 + c[0] * 16, kind = c[5];
    s += '<path d="M' + x + ' ' + c[1] + 'V' + c[4] + '" stroke="#4fe04f"/>';
    if (kind == 3) s += '<path d="M' + (x - 5) + ' ' + c[2] + 'H' + (x + 5) + '" stroke="#22ee22" stroke-width="2"/>';
    else if (c[2] == c[3]) s += '<path d="M' + (x - 5) + ' ' + c[2] + 'H' + (x + 5) + '" stroke="#4fe04f"/>';
    else s += '<rect x="' + (x - 5) + '" y="' + (c[2] + .5) + '" width="10" height="' + (c[3] - c[2]) + '" fill="' + (kind ? '#fff' : '#000') + '" stroke="#4fe04f"/>';
  });
  document.getElementById('candles').innerHTML = s;

  var g = '', i;
  for (i = 0; i < 34; i++) { var gx = 283.5 + i * 32; if (gx < 1317) g += '<path d="M' + gx + ' 79V501" stroke="#8e8e8e" stroke-dasharray="3 3"/><path d="M' + gx + ' 497V501" stroke="#fff"/>'; }
  [113, 148, 184, 219, 254, 290, 325, 360, 395, 431, 466].forEach(function (y) {
    g += '<path d="M251 ' + (y + .5) + 'H1317" stroke="#8e8e8e" stroke-dasharray="3 3"/><path d="M1317 ' + (y + .5) + 'h3" stroke="#fff"/>';
  });
  document.getElementById('grid').innerHTML = g;

  // tick chart, zoomed coordinates: x = 50 + z / 3, y = 400 + z / 3
  var R = '#ee6a72', B = '#1f5fc4';
  var segs = [
    [30,52,199,291,R,R],[54,70,199,291,B,B],[72,78,199,291,R,R],[82,122,291,383,B,B],[124,148,291,383,R,R],[150,162,383,475,R,B],
    [166,190,291,383,B,B],[192,198,291,383,R,R],[200,218,291,383,B,B],[226,246,383,475,B,B],[252,258,475,567,R,B],[260,294,475,567,R,R],
    [302,310,291,383,B,B],[312,322,291,383,R,R],[324,330,291,383,B,B],[334,342,199,291,R,B],[344,356,199,291,R,R],[364,400,15,107,R,R],
    [402,406,107,199,B,B],[414,422,199,291,B,B],[424,440,199,291,R,R],[430,438,107,199,R,R],[444,466,199,291,R,R],[472,490,291,383,B,B],
    [492,498,291,383,R,R],[500,512,291,383,B,B],[514,526,291,383,R,R],[534,546,475,567,R,B],[552,570,291,383,B,B],[576,604,107,199,B,B],
    [618,640,15,107,R,B],[640,676,15,107,R,R],[678,686,15,107,B,B],[688,700,15,107,R,R],[708,770,107,199,R,B],[772,800,199,291,R,R]
  ];
  var t = '';
  segs.forEach(function (q) {
    for (var z = q[0]; z <= q[1]; z += 8) {
      var x = Math.round(50 + z / 3) + .5, top = 400 + q[2] / 3, bot = 400 + q[3] / 3, mid = (top + bot) / 2;
      t += '<path d="M' + x + ' ' + top + 'V' + mid + '" stroke="' + q[4] + '" stroke-width="1.600"/><path d="M' + x + ' ' + mid + 'V' + bot + '" stroke="' + q[5] + '" stroke-width="1.600"/>';
    }
  });
  var line = [[30,291],[148,291],[148,383],[165,383],[165,291],[220,291],[220,383],[248,383],[248,475],[296,475],[296,291],[330,291],[330,199],[360,199],[360,107],[405,107],[405,199],[445,199],[445,291],[528,291],[528,429],[532,520],[545,520],[548,429],[552,291],[573,291],[573,107],[705,107],[708,199],[770,199],[772,291],[806,291]];
  t += '<polyline fill="none" stroke="#ee7a80" points="' + line.map(function (p) { return (50 + p[0] / 3) + ',' + (400 + p[1] / 3); }).join(' ') + '"/>';
  document.getElementById('tickbars').innerHTML = t;

  var h = '<path d="M70.500 314V619" stroke="#888" stroke-dasharray="3 3"/><path d="M61 466.500H318" stroke="#ddd" stroke-dasharray="3 3"/>';
  [92, 124, 156, 188, 220, 252, 284, 316].forEach(function (x) {
    h += '<path d="M' + (x + .5) + ' 314V619" stroke="#ddd" stroke-dasharray="3 3"/><path d="M' + (x + .5) + ' 619v3" stroke="#111"/>';
  });
  document.getElementById('tickgrid').innerHTML = h;
</script>
</body>
</html>
